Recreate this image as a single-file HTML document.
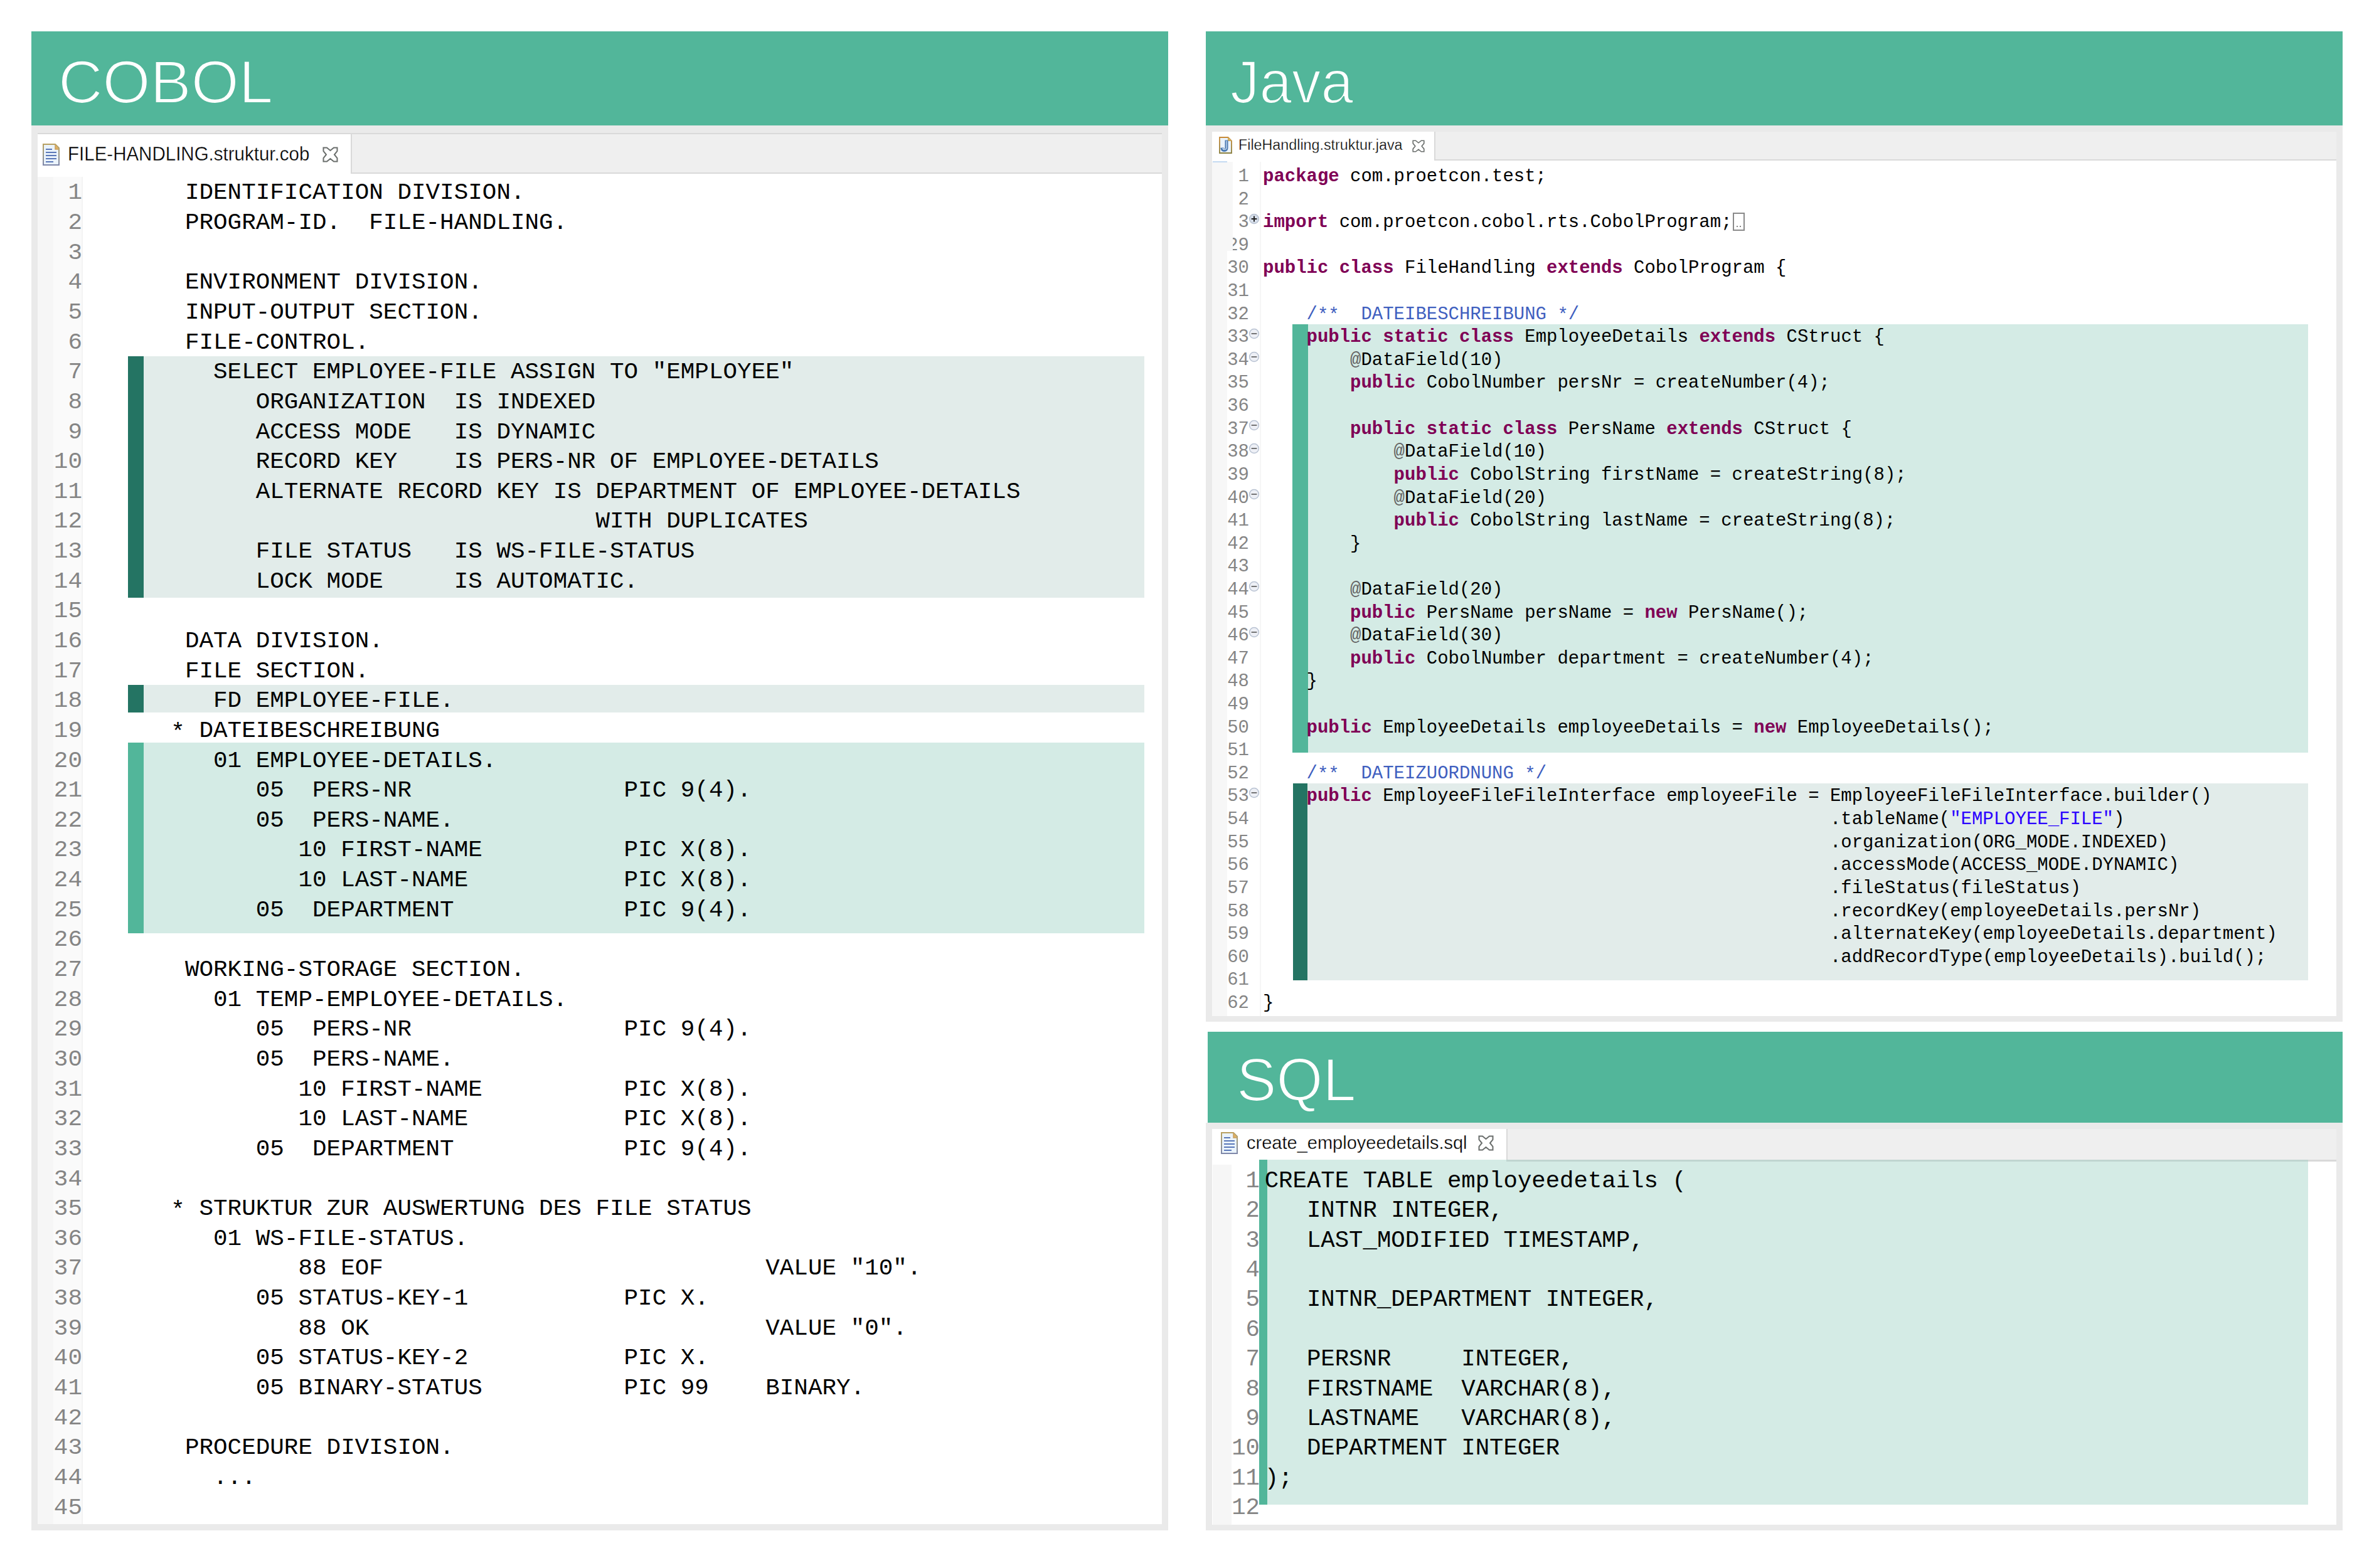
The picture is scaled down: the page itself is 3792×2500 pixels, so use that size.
<!DOCTYPE html>
<html><head><meta charset="utf-8"><style>
html,body{margin:0;padding:0;}
body{width:3792px;height:2500px;background:#fff;position:relative;overflow:hidden;}
.b{position:absolute;}
.t{position:absolute;white-space:pre;margin:0;padding:0;}
.hdr{position:absolute;font-family:"Liberation Sans",sans-serif;color:#fff;white-space:pre;transform-origin:0 0;-webkit-text-stroke:2.2px #52b69a;paint-order:normal;}
.tab{position:absolute;font-family:"Liberation Sans",sans-serif;color:#000;white-space:pre;transform-origin:0 0;-webkit-text-stroke:0.35px #fff;}
.cm{font-family:"Liberation Mono",monospace;}
.k{color:#7f0055;font-weight:bold;}
.c{color:#3f5fbf;}
.s{color:#2a00ff;}
.a{color:#646464;}
.ln{color:#858585;text-align:right;}
</style></head><body>

<div class="b" style="left:50px;top:200px;width:1812px;height:2240px;background:#eaeaea;"></div>
<div class="b" style="left:50px;top:50px;width:1812px;height:150px;background:#52b69a;"></div>
<div class="hdr" style="left:93.4px;top:82.4px;font-size:96.7px;line-height:96.7px;transform:scaleX(1.0106);">COBOL</div>
<div class="b" style="left:60px;top:212px;width:1792px;height:2px;background:#d9d9d9;"></div>
<div class="b" style="left:60px;top:214px;width:1792px;height:63px;background:#efefef;"></div>
<div class="b" style="left:60px;top:275px;width:1792px;height:2px;background:#d9d9d9;"></div>
<div class="b" style="left:559px;top:214px;width:2px;height:63px;background:#d9d9d9;"></div>
<div class="b" style="left:60px;top:214px;width:499px;height:68px;background:#fff;"></div>
<div class="b" style="left:60px;top:277px;width:1792px;height:2153px;background:#fff;"></div>
<div class="b" style="left:60px;top:282px;width:25px;height:2148px;background:#f6f6f6;"></div>
<div class="b" style="left:85px;top:282px;width:45px;height:2148px;background:#fafafa;"></div>
<div class="b" style="left:130px;top:282px;width:2px;height:2148px;background:#f3f3f3;"></div>
<svg class="b" style="left:68px;top:229px" width="27" height="35" viewBox="0 0 27 35"><defs><linearGradient id="fg" x1="0" y1="0" x2="0" y2="1"><stop offset="0" stop-color="#b8a060"/><stop offset="0.5" stop-color="#9a9a8a"/><stop offset="1" stop-color="#7f88aa"/></linearGradient></defs><path d="M1 1 H20 L26 7 V34 H1 Z" fill="#eaf3fb" stroke="url(#fg)" stroke-width="2"/><path d="M20 1 V9 H26" fill="#e0b060" stroke="#c8a060" stroke-width="1.5"/><rect x="5" y="8" width="10" height="2" fill="#5a78b8"/><rect x="5" y="13" width="17" height="2" fill="#5a78b8"/><rect x="5" y="18" width="17" height="2" fill="#5a78b8"/><rect x="5" y="23" width="17" height="2" fill="#5a78b8"/><rect x="5" y="28" width="12" height="2" fill="#5a78b8"/></svg>
<div class="tab" style="left:107.5px;top:229px;font-size:32px;line-height:32px;transform:scaleX(0.922);">FILE-HANDLING.struktur.cob</div>
<svg class="b" style="left:514px;top:234px" width="25" height="25" viewBox="0 0 25 25"><path d="M1.5 7 V1.5 H7 L12.5 6 L18 1.5 H23.5 V7 L19 12.5 L23.5 18 V23.5 H18 L12.5 19 L7 23.5 H1.5 V18 L6 12.5 Z" fill="none" stroke="#6a6e6c" stroke-width="2" stroke-linejoin="miter"/></svg>
<div class="b" style="left:229px;top:568px;width:1595px;height:385px;background:#e2ecea;"></div>
<div class="b" style="left:204px;top:568px;width:25px;height:385px;background:#247463;"></div>
<div class="b" style="left:229px;top:1092px;width:1595px;height:44px;background:#e2ecea;"></div>
<div class="b" style="left:204px;top:1092px;width:25px;height:44px;background:#247463;"></div>
<div class="b" style="left:229px;top:1184px;width:1595px;height:304px;background:#d4ebe5;"></div>
<div class="b" style="left:204px;top:1184px;width:25px;height:304px;background:#52b69a;"></div>
<div class="t cm" style="left:136.9px;top:284.40px;font-size:37.625px;line-height:47.64px;color:#000">       IDENTIFICATION DIVISION.</div>
<div class="t cm ln" style="left:-69px;width:200px;top:284.40px;font-size:37.625px;line-height:47.64px;">1</div>
<div class="t cm" style="left:136.9px;top:332.04px;font-size:37.625px;line-height:47.64px;color:#000">       PROGRAM-ID.  FILE-HANDLING.</div>
<div class="t cm ln" style="left:-69px;width:200px;top:332.04px;font-size:37.625px;line-height:47.64px;">2</div>
<div class="t cm" style="left:136.9px;top:379.68px;font-size:37.625px;line-height:47.64px;color:#000"></div>
<div class="t cm ln" style="left:-69px;width:200px;top:379.68px;font-size:37.625px;line-height:47.64px;">3</div>
<div class="t cm" style="left:136.9px;top:427.32px;font-size:37.625px;line-height:47.64px;color:#000">       ENVIRONMENT DIVISION.</div>
<div class="t cm ln" style="left:-69px;width:200px;top:427.32px;font-size:37.625px;line-height:47.64px;">4</div>
<div class="t cm" style="left:136.9px;top:474.96px;font-size:37.625px;line-height:47.64px;color:#000">       INPUT-OUTPUT SECTION.</div>
<div class="t cm ln" style="left:-69px;width:200px;top:474.96px;font-size:37.625px;line-height:47.64px;">5</div>
<div class="t cm" style="left:136.9px;top:522.60px;font-size:37.625px;line-height:47.64px;color:#000">       FILE-CONTROL.</div>
<div class="t cm ln" style="left:-69px;width:200px;top:522.60px;font-size:37.625px;line-height:47.64px;">6</div>
<div class="t cm" style="left:136.9px;top:570.24px;font-size:37.625px;line-height:47.64px;color:#000">         SELECT EMPLOYEE-FILE ASSIGN TO "EMPLOYEE"</div>
<div class="t cm ln" style="left:-69px;width:200px;top:570.24px;font-size:37.625px;line-height:47.64px;">7</div>
<div class="t cm" style="left:136.9px;top:617.88px;font-size:37.625px;line-height:47.64px;color:#000">            ORGANIZATION  IS INDEXED</div>
<div class="t cm ln" style="left:-69px;width:200px;top:617.88px;font-size:37.625px;line-height:47.64px;">8</div>
<div class="t cm" style="left:136.9px;top:665.52px;font-size:37.625px;line-height:47.64px;color:#000">            ACCESS MODE   IS DYNAMIC</div>
<div class="t cm ln" style="left:-69px;width:200px;top:665.52px;font-size:37.625px;line-height:47.64px;">9</div>
<div class="t cm" style="left:136.9px;top:713.16px;font-size:37.625px;line-height:47.64px;color:#000">            RECORD KEY    IS PERS-NR OF EMPLOYEE-DETAILS</div>
<div class="t cm ln" style="left:-69px;width:200px;top:713.16px;font-size:37.625px;line-height:47.64px;">10</div>
<div class="t cm" style="left:136.9px;top:760.80px;font-size:37.625px;line-height:47.64px;color:#000">            ALTERNATE RECORD KEY IS DEPARTMENT OF EMPLOYEE-DETAILS</div>
<div class="t cm ln" style="left:-69px;width:200px;top:760.80px;font-size:37.625px;line-height:47.64px;">11</div>
<div class="t cm" style="left:136.9px;top:808.44px;font-size:37.625px;line-height:47.64px;color:#000">                                    WITH DUPLICATES</div>
<div class="t cm ln" style="left:-69px;width:200px;top:808.44px;font-size:37.625px;line-height:47.64px;">12</div>
<div class="t cm" style="left:136.9px;top:856.08px;font-size:37.625px;line-height:47.64px;color:#000">            FILE STATUS   IS WS-FILE-STATUS</div>
<div class="t cm ln" style="left:-69px;width:200px;top:856.08px;font-size:37.625px;line-height:47.64px;">13</div>
<div class="t cm" style="left:136.9px;top:903.72px;font-size:37.625px;line-height:47.64px;color:#000">            LOCK MODE     IS AUTOMATIC.</div>
<div class="t cm ln" style="left:-69px;width:200px;top:903.72px;font-size:37.625px;line-height:47.64px;">14</div>
<div class="t cm" style="left:136.9px;top:951.36px;font-size:37.625px;line-height:47.64px;color:#000"></div>
<div class="t cm ln" style="left:-69px;width:200px;top:951.36px;font-size:37.625px;line-height:47.64px;">15</div>
<div class="t cm" style="left:136.9px;top:999.00px;font-size:37.625px;line-height:47.64px;color:#000">       DATA DIVISION.</div>
<div class="t cm ln" style="left:-69px;width:200px;top:999.00px;font-size:37.625px;line-height:47.64px;">16</div>
<div class="t cm" style="left:136.9px;top:1046.64px;font-size:37.625px;line-height:47.64px;color:#000">       FILE SECTION.</div>
<div class="t cm ln" style="left:-69px;width:200px;top:1046.64px;font-size:37.625px;line-height:47.64px;">17</div>
<div class="t cm" style="left:136.9px;top:1094.28px;font-size:37.625px;line-height:47.64px;color:#000">         FD EMPLOYEE-FILE.</div>
<div class="t cm ln" style="left:-69px;width:200px;top:1094.28px;font-size:37.625px;line-height:47.64px;">18</div>
<div class="t cm" style="left:136.9px;top:1141.92px;font-size:37.625px;line-height:47.64px;color:#000">      <span style="position:relative;top:3px">*</span> DATEIBESCHREIBUNG</div>
<div class="t cm ln" style="left:-69px;width:200px;top:1141.92px;font-size:37.625px;line-height:47.64px;">19</div>
<div class="t cm" style="left:136.9px;top:1189.56px;font-size:37.625px;line-height:47.64px;color:#000">         01 EMPLOYEE-DETAILS.</div>
<div class="t cm ln" style="left:-69px;width:200px;top:1189.56px;font-size:37.625px;line-height:47.64px;">20</div>
<div class="t cm" style="left:136.9px;top:1237.20px;font-size:37.625px;line-height:47.64px;color:#000">            05  PERS-NR               PIC 9(4).</div>
<div class="t cm ln" style="left:-69px;width:200px;top:1237.20px;font-size:37.625px;line-height:47.64px;">21</div>
<div class="t cm" style="left:136.9px;top:1284.84px;font-size:37.625px;line-height:47.64px;color:#000">            05  PERS-NAME.</div>
<div class="t cm ln" style="left:-69px;width:200px;top:1284.84px;font-size:37.625px;line-height:47.64px;">22</div>
<div class="t cm" style="left:136.9px;top:1332.48px;font-size:37.625px;line-height:47.64px;color:#000">               10 FIRST-NAME          PIC X(8).</div>
<div class="t cm ln" style="left:-69px;width:200px;top:1332.48px;font-size:37.625px;line-height:47.64px;">23</div>
<div class="t cm" style="left:136.9px;top:1380.12px;font-size:37.625px;line-height:47.64px;color:#000">               10 LAST-NAME           PIC X(8).</div>
<div class="t cm ln" style="left:-69px;width:200px;top:1380.12px;font-size:37.625px;line-height:47.64px;">24</div>
<div class="t cm" style="left:136.9px;top:1427.76px;font-size:37.625px;line-height:47.64px;color:#000">            05  DEPARTMENT            PIC 9(4).</div>
<div class="t cm ln" style="left:-69px;width:200px;top:1427.76px;font-size:37.625px;line-height:47.64px;">25</div>
<div class="t cm" style="left:136.9px;top:1475.40px;font-size:37.625px;line-height:47.64px;color:#000"></div>
<div class="t cm ln" style="left:-69px;width:200px;top:1475.40px;font-size:37.625px;line-height:47.64px;">26</div>
<div class="t cm" style="left:136.9px;top:1523.04px;font-size:37.625px;line-height:47.64px;color:#000">       WORKING-STORAGE SECTION.</div>
<div class="t cm ln" style="left:-69px;width:200px;top:1523.04px;font-size:37.625px;line-height:47.64px;">27</div>
<div class="t cm" style="left:136.9px;top:1570.68px;font-size:37.625px;line-height:47.64px;color:#000">         01 TEMP-EMPLOYEE-DETAILS.</div>
<div class="t cm ln" style="left:-69px;width:200px;top:1570.68px;font-size:37.625px;line-height:47.64px;">28</div>
<div class="t cm" style="left:136.9px;top:1618.32px;font-size:37.625px;line-height:47.64px;color:#000">            05  PERS-NR               PIC 9(4).</div>
<div class="t cm ln" style="left:-69px;width:200px;top:1618.32px;font-size:37.625px;line-height:47.64px;">29</div>
<div class="t cm" style="left:136.9px;top:1665.96px;font-size:37.625px;line-height:47.64px;color:#000">            05  PERS-NAME.</div>
<div class="t cm ln" style="left:-69px;width:200px;top:1665.96px;font-size:37.625px;line-height:47.64px;">30</div>
<div class="t cm" style="left:136.9px;top:1713.60px;font-size:37.625px;line-height:47.64px;color:#000">               10 FIRST-NAME          PIC X(8).</div>
<div class="t cm ln" style="left:-69px;width:200px;top:1713.60px;font-size:37.625px;line-height:47.64px;">31</div>
<div class="t cm" style="left:136.9px;top:1761.24px;font-size:37.625px;line-height:47.64px;color:#000">               10 LAST-NAME           PIC X(8).</div>
<div class="t cm ln" style="left:-69px;width:200px;top:1761.24px;font-size:37.625px;line-height:47.64px;">32</div>
<div class="t cm" style="left:136.9px;top:1808.88px;font-size:37.625px;line-height:47.64px;color:#000">            05  DEPARTMENT            PIC 9(4).</div>
<div class="t cm ln" style="left:-69px;width:200px;top:1808.88px;font-size:37.625px;line-height:47.64px;">33</div>
<div class="t cm" style="left:136.9px;top:1856.52px;font-size:37.625px;line-height:47.64px;color:#000"></div>
<div class="t cm ln" style="left:-69px;width:200px;top:1856.52px;font-size:37.625px;line-height:47.64px;">34</div>
<div class="t cm" style="left:136.9px;top:1904.16px;font-size:37.625px;line-height:47.64px;color:#000">      <span style="position:relative;top:3px">*</span> STRUKTUR ZUR AUSWERTUNG DES FILE STATUS</div>
<div class="t cm ln" style="left:-69px;width:200px;top:1904.16px;font-size:37.625px;line-height:47.64px;">35</div>
<div class="t cm" style="left:136.9px;top:1951.80px;font-size:37.625px;line-height:47.64px;color:#000">         01 WS-FILE-STATUS.</div>
<div class="t cm ln" style="left:-69px;width:200px;top:1951.80px;font-size:37.625px;line-height:47.64px;">36</div>
<div class="t cm" style="left:136.9px;top:1999.44px;font-size:37.625px;line-height:47.64px;color:#000">               88 EOF                           VALUE "10".</div>
<div class="t cm ln" style="left:-69px;width:200px;top:1999.44px;font-size:37.625px;line-height:47.64px;">37</div>
<div class="t cm" style="left:136.9px;top:2047.08px;font-size:37.625px;line-height:47.64px;color:#000">            05 STATUS-KEY-1           PIC X.</div>
<div class="t cm ln" style="left:-69px;width:200px;top:2047.08px;font-size:37.625px;line-height:47.64px;">38</div>
<div class="t cm" style="left:136.9px;top:2094.72px;font-size:37.625px;line-height:47.64px;color:#000">               88 OK                            VALUE "0".</div>
<div class="t cm ln" style="left:-69px;width:200px;top:2094.72px;font-size:37.625px;line-height:47.64px;">39</div>
<div class="t cm" style="left:136.9px;top:2142.36px;font-size:37.625px;line-height:47.64px;color:#000">            05 STATUS-KEY-2           PIC X.</div>
<div class="t cm ln" style="left:-69px;width:200px;top:2142.36px;font-size:37.625px;line-height:47.64px;">40</div>
<div class="t cm" style="left:136.9px;top:2190.00px;font-size:37.625px;line-height:47.64px;color:#000">            05 BINARY-STATUS          PIC 99    BINARY.</div>
<div class="t cm ln" style="left:-69px;width:200px;top:2190.00px;font-size:37.625px;line-height:47.64px;">41</div>
<div class="t cm" style="left:136.9px;top:2237.64px;font-size:37.625px;line-height:47.64px;color:#000"></div>
<div class="t cm ln" style="left:-69px;width:200px;top:2237.64px;font-size:37.625px;line-height:47.64px;">42</div>
<div class="t cm" style="left:136.9px;top:2285.28px;font-size:37.625px;line-height:47.64px;color:#000">       PROCEDURE DIVISION.</div>
<div class="t cm ln" style="left:-69px;width:200px;top:2285.28px;font-size:37.625px;line-height:47.64px;">43</div>
<div class="t cm" style="left:136.9px;top:2332.92px;font-size:37.625px;line-height:47.64px;color:#000">         ...</div>
<div class="t cm ln" style="left:-69px;width:200px;top:2332.92px;font-size:37.625px;line-height:47.64px;">44</div>
<div class="t cm" style="left:136.9px;top:2380.56px;font-size:37.625px;line-height:47.64px;color:#000"></div>
<div class="t cm ln" style="left:-69px;width:200px;top:2380.56px;font-size:37.625px;line-height:47.64px;">45</div>
<div class="b" style="left:1922px;top:200px;width:1812px;height:1429px;background:#eaeaea;"></div>
<div class="b" style="left:1922px;top:50px;width:1812px;height:150px;background:#52b69a;"></div>
<div class="hdr" style="left:1960.9px;top:81.7px;font-size:96.7px;line-height:96.7px;transform:scaleX(0.96);">Java</div>
<div class="b" style="left:1932px;top:210px;width:1792px;height:44px;background:#efefef;"></div>
<div class="b" style="left:1932px;top:254px;width:1792px;height:2px;background:#d9d9d9;"></div>
<div class="b" style="left:2286px;top:210px;width:2px;height:46px;background:#d9d9d9;"></div>
<div class="b" style="left:1932px;top:210px;width:354px;height:48px;background:#fff;"></div>
<div class="b" style="left:1932px;top:256px;width:1792px;height:1364px;background:#fff;"></div>
<div class="b" style="left:1932px;top:258px;width:33px;height:142px;background:#f7f7f7;"></div>
<div class="b" style="left:1932px;top:400px;width:24px;height:1220px;background:#f7f7f7;"></div>
<div class="b" style="left:2008px;top:258px;width:2px;height:1362px;background:#f6f6f6;"></div>
<svg class="b" style="left:1943px;top:218px" width="21" height="27" viewBox="0 0 21 27"><defs><linearGradient id="jg" x1="0" y1="0" x2="0" y2="1"><stop offset="0" stop-color="#c88a38"/><stop offset="1" stop-color="#8a8040"/></linearGradient></defs><path d="M1 1 H14.5 L20 6.5 V26 H1 Z" fill="#eaf3fc" stroke="url(#jg)" stroke-width="1.8"/><path d="M14.5 1 V6.5 H20" fill="#d8b868" stroke="#c8a050" stroke-width="1"/><path d="M12 5.5 V17.5 Q12 21.5 8.3 21.5 Q5.2 21.5 4.8 17.5" fill="none" stroke="#4a78b0" stroke-width="5"/><path d="M12 6.5 V17.5 Q12 20.3 8.3 20.3 Q6.4 20.3 5.9 18" fill="none" stroke="#c8dcf0" stroke-width="1.4"/></svg>
<div class="tab" style="left:1974px;top:219.8px;font-size:23.3px;line-height:23.3px;transform:scaleX(1.0);">FileHandling.struktur.java</div>
<svg class="b" style="left:2251px;top:223px" width="20" height="20" viewBox="0 0 25 25"><path d="M1.5 7 V1.5 H7 L12.5 6 L18 1.5 H23.5 V7 L19 12.5 L23.5 18 V23.5 H18 L12.5 19 L7 23.5 H1.5 V18 L6 12.5 Z" fill="none" stroke="#6a6e6c" stroke-width="2" stroke-linejoin="miter"/></svg>
<div class="b" style="left:2085px;top:517px;width:1594px;height:683px;background:#d4ebe5;"></div>
<div class="b" style="left:2060px;top:517px;width:25px;height:683px;background:#52b69a;"></div>
<div class="b" style="left:2084px;top:1249px;width:1595px;height:314px;background:#e2ecea;"></div>
<div class="b" style="left:2061px;top:1249px;width:23px;height:314px;background:#247463;"></div>
<div class="t cm" style="left:2013px;top:264.00px;font-size:28.97px;line-height:36.61px;color:#000"><span class="k">package</span> com.proetcon.test;</div>
<div class="t cm ln" style="left:1791px;width:200px;top:264.00px;font-size:28.97px;line-height:36.61px;">1</div>
<div class="t cm" style="left:2013px;top:300.61px;font-size:28.97px;line-height:36.61px;color:#000"></div>
<div class="t cm ln" style="left:1791px;width:200px;top:300.61px;font-size:28.97px;line-height:36.61px;">2</div>
<div class="t cm" style="left:2013px;top:337.22px;font-size:28.97px;line-height:36.61px;color:#000"><span class="k">import</span> com.proetcon.cobol.rts.CobolProgram;<span style="display:inline-block;width:19px;height:29px;border:2px solid #8a8a8a;box-sizing:border-box;vertical-align:-6px;margin-left:1px;position:relative;"><span style="position:absolute;left:4px;bottom:4px;width:2px;height:2px;background:#888"></span><span style="position:absolute;left:9px;bottom:4px;width:2px;height:2px;background:#888"></span></span></div>
<div class="t cm ln" style="left:1791px;width:200px;top:337.22px;font-size:28.97px;line-height:36.61px;">3</div>
<svg class="b" style="left:1990px;top:339.9px" width="18" height="18" viewBox="0 0 18 18"><circle cx="9" cy="9" r="7.4" fill="#d6deea" stroke="#b8c2d2" stroke-width="1.5"/><path d="M4.6 9 H13.4 M9 4.6 V13.4" stroke="#222" stroke-width="2"/></svg>
<div class="t cm" style="left:2013px;top:373.83px;font-size:28.97px;line-height:36.61px;color:#000"></div>
<div class="t cm ln" style="left:1791px;width:200px;top:373.83px;font-size:28.97px;line-height:36.61px;">29</div>
<div class="t cm" style="left:2013px;top:410.44px;font-size:28.97px;line-height:36.61px;color:#000"><span class="k">public</span> <span class="k">class</span> FileHandling <span class="k">extends</span> CobolProgram {</div>
<div class="t cm ln" style="left:1791px;width:200px;top:410.44px;font-size:28.97px;line-height:36.61px;">30</div>
<div class="t cm" style="left:2013px;top:447.05px;font-size:28.97px;line-height:36.61px;color:#000"></div>
<div class="t cm ln" style="left:1791px;width:200px;top:447.05px;font-size:28.97px;line-height:36.61px;">31</div>
<div class="t cm" style="left:2013px;top:483.66px;font-size:28.97px;line-height:36.61px;color:#000"><span class="c">    /<span style="position:relative;top:2px">*</span><span style="position:relative;top:2px">*</span>  DATEIBESCHREIBUNG <span style="position:relative;top:2px">*</span>/</span></div>
<div class="t cm ln" style="left:1791px;width:200px;top:483.66px;font-size:28.97px;line-height:36.61px;">32</div>
<div class="t cm" style="left:2013px;top:520.27px;font-size:28.97px;line-height:36.61px;color:#000">    <span class="k">public</span> <span class="k">static</span> <span class="k">class</span> EmployeeDetails <span class="k">extends</span> CStruct {</div>
<div class="t cm ln" style="left:1791px;width:200px;top:520.27px;font-size:28.97px;line-height:36.61px;">33</div>
<svg class="b" style="left:1990px;top:523.0px" width="18" height="18" viewBox="0 0 18 18"><circle cx="9" cy="9" r="7.4" fill="#eef0f6" stroke="#b8c2d2" stroke-width="1.5"/><path d="M4.6 9 H13.4" stroke="#555" stroke-width="1.6"/></svg>
<div class="t cm" style="left:2013px;top:556.88px;font-size:28.97px;line-height:36.61px;color:#000">        <span class="a">@</span>DataField(10)</div>
<div class="t cm ln" style="left:1791px;width:200px;top:556.88px;font-size:28.97px;line-height:36.61px;">34</div>
<svg class="b" style="left:1990px;top:559.6px" width="18" height="18" viewBox="0 0 18 18"><circle cx="9" cy="9" r="7.4" fill="#eef0f6" stroke="#b8c2d2" stroke-width="1.5"/><path d="M4.6 9 H13.4" stroke="#555" stroke-width="1.6"/></svg>
<div class="t cm" style="left:2013px;top:593.49px;font-size:28.97px;line-height:36.61px;color:#000">        <span class="k">public</span> CobolNumber persNr = createNumber(4);</div>
<div class="t cm ln" style="left:1791px;width:200px;top:593.49px;font-size:28.97px;line-height:36.61px;">35</div>
<div class="t cm" style="left:2013px;top:630.10px;font-size:28.97px;line-height:36.61px;color:#000"></div>
<div class="t cm ln" style="left:1791px;width:200px;top:630.10px;font-size:28.97px;line-height:36.61px;">36</div>
<div class="t cm" style="left:2013px;top:666.71px;font-size:28.97px;line-height:36.61px;color:#000">        <span class="k">public</span> <span class="k">static</span> <span class="k">class</span> PersName <span class="k">extends</span> CStruct {</div>
<div class="t cm ln" style="left:1791px;width:200px;top:666.71px;font-size:28.97px;line-height:36.61px;">37</div>
<svg class="b" style="left:1990px;top:669.4px" width="18" height="18" viewBox="0 0 18 18"><circle cx="9" cy="9" r="7.4" fill="#eef0f6" stroke="#b8c2d2" stroke-width="1.5"/><path d="M4.6 9 H13.4" stroke="#555" stroke-width="1.6"/></svg>
<div class="t cm" style="left:2013px;top:703.32px;font-size:28.97px;line-height:36.61px;color:#000">            <span class="a">@</span>DataField(10)</div>
<div class="t cm ln" style="left:1791px;width:200px;top:703.32px;font-size:28.97px;line-height:36.61px;">38</div>
<svg class="b" style="left:1990px;top:706.0px" width="18" height="18" viewBox="0 0 18 18"><circle cx="9" cy="9" r="7.4" fill="#eef0f6" stroke="#b8c2d2" stroke-width="1.5"/><path d="M4.6 9 H13.4" stroke="#555" stroke-width="1.6"/></svg>
<div class="t cm" style="left:2013px;top:739.93px;font-size:28.97px;line-height:36.61px;color:#000">            <span class="k">public</span> CobolString firstName = createString(8);</div>
<div class="t cm ln" style="left:1791px;width:200px;top:739.93px;font-size:28.97px;line-height:36.61px;">39</div>
<div class="t cm" style="left:2013px;top:776.54px;font-size:28.97px;line-height:36.61px;color:#000">            <span class="a">@</span>DataField(20)</div>
<div class="t cm ln" style="left:1791px;width:200px;top:776.54px;font-size:28.97px;line-height:36.61px;">40</div>
<svg class="b" style="left:1990px;top:779.2px" width="18" height="18" viewBox="0 0 18 18"><circle cx="9" cy="9" r="7.4" fill="#eef0f6" stroke="#b8c2d2" stroke-width="1.5"/><path d="M4.6 9 H13.4" stroke="#555" stroke-width="1.6"/></svg>
<div class="t cm" style="left:2013px;top:813.15px;font-size:28.97px;line-height:36.61px;color:#000">            <span class="k">public</span> CobolString lastName = createString(8);</div>
<div class="t cm ln" style="left:1791px;width:200px;top:813.15px;font-size:28.97px;line-height:36.61px;">41</div>
<div class="t cm" style="left:2013px;top:849.76px;font-size:28.97px;line-height:36.61px;color:#000">        }</div>
<div class="t cm ln" style="left:1791px;width:200px;top:849.76px;font-size:28.97px;line-height:36.61px;">42</div>
<div class="t cm" style="left:2013px;top:886.37px;font-size:28.97px;line-height:36.61px;color:#000"></div>
<div class="t cm ln" style="left:1791px;width:200px;top:886.37px;font-size:28.97px;line-height:36.61px;">43</div>
<div class="t cm" style="left:2013px;top:922.98px;font-size:28.97px;line-height:36.61px;color:#000">        <span class="a">@</span>DataField(20)</div>
<div class="t cm ln" style="left:1791px;width:200px;top:922.98px;font-size:28.97px;line-height:36.61px;">44</div>
<svg class="b" style="left:1990px;top:925.7px" width="18" height="18" viewBox="0 0 18 18"><circle cx="9" cy="9" r="7.4" fill="#eef0f6" stroke="#b8c2d2" stroke-width="1.5"/><path d="M4.6 9 H13.4" stroke="#555" stroke-width="1.6"/></svg>
<div class="t cm" style="left:2013px;top:959.59px;font-size:28.97px;line-height:36.61px;color:#000">        <span class="k">public</span> PersName persName = <span class="k">new</span> PersName();</div>
<div class="t cm ln" style="left:1791px;width:200px;top:959.59px;font-size:28.97px;line-height:36.61px;">45</div>
<div class="t cm" style="left:2013px;top:996.20px;font-size:28.97px;line-height:36.61px;color:#000">        <span class="a">@</span>DataField(30)</div>
<div class="t cm ln" style="left:1791px;width:200px;top:996.20px;font-size:28.97px;line-height:36.61px;">46</div>
<svg class="b" style="left:1990px;top:998.9px" width="18" height="18" viewBox="0 0 18 18"><circle cx="9" cy="9" r="7.4" fill="#eef0f6" stroke="#b8c2d2" stroke-width="1.5"/><path d="M4.6 9 H13.4" stroke="#555" stroke-width="1.6"/></svg>
<div class="t cm" style="left:2013px;top:1032.81px;font-size:28.97px;line-height:36.61px;color:#000">        <span class="k">public</span> CobolNumber department = createNumber(4);</div>
<div class="t cm ln" style="left:1791px;width:200px;top:1032.81px;font-size:28.97px;line-height:36.61px;">47</div>
<div class="t cm" style="left:2013px;top:1069.42px;font-size:28.97px;line-height:36.61px;color:#000">    }</div>
<div class="t cm ln" style="left:1791px;width:200px;top:1069.42px;font-size:28.97px;line-height:36.61px;">48</div>
<div class="t cm" style="left:2013px;top:1106.03px;font-size:28.97px;line-height:36.61px;color:#000"></div>
<div class="t cm ln" style="left:1791px;width:200px;top:1106.03px;font-size:28.97px;line-height:36.61px;">49</div>
<div class="t cm" style="left:2013px;top:1142.64px;font-size:28.97px;line-height:36.61px;color:#000">    <span class="k">public</span> EmployeeDetails employeeDetails = <span class="k">new</span> EmployeeDetails();</div>
<div class="t cm ln" style="left:1791px;width:200px;top:1142.64px;font-size:28.97px;line-height:36.61px;">50</div>
<div class="t cm" style="left:2013px;top:1179.25px;font-size:28.97px;line-height:36.61px;color:#000"></div>
<div class="t cm ln" style="left:1791px;width:200px;top:1179.25px;font-size:28.97px;line-height:36.61px;">51</div>
<div class="t cm" style="left:2013px;top:1215.86px;font-size:28.97px;line-height:36.61px;color:#000"><span class="c">    /<span style="position:relative;top:2px">*</span><span style="position:relative;top:2px">*</span>  DATEIZUORDNUNG <span style="position:relative;top:2px">*</span>/</span></div>
<div class="t cm ln" style="left:1791px;width:200px;top:1215.86px;font-size:28.97px;line-height:36.61px;">52</div>
<div class="t cm" style="left:2013px;top:1252.47px;font-size:28.97px;line-height:36.61px;color:#000">    <span class="k">public</span> EmployeeFileFileInterface employeeFile = EmployeeFileFileInterface.builder()</div>
<div class="t cm ln" style="left:1791px;width:200px;top:1252.47px;font-size:28.97px;line-height:36.61px;">53</div>
<svg class="b" style="left:1990px;top:1255.2px" width="18" height="18" viewBox="0 0 18 18"><circle cx="9" cy="9" r="7.4" fill="#eef0f6" stroke="#b8c2d2" stroke-width="1.5"/><path d="M4.6 9 H13.4" stroke="#555" stroke-width="1.6"/></svg>
<div class="t cm" style="left:2013px;top:1289.08px;font-size:28.97px;line-height:36.61px;color:#000">                                                    .tableName(<span class="s">"EMPLOYEE_FILE"</span>)</div>
<div class="t cm ln" style="left:1791px;width:200px;top:1289.08px;font-size:28.97px;line-height:36.61px;">54</div>
<div class="t cm" style="left:2013px;top:1325.69px;font-size:28.97px;line-height:36.61px;color:#000">                                                    .organization(ORG_MODE.INDEXED)</div>
<div class="t cm ln" style="left:1791px;width:200px;top:1325.69px;font-size:28.97px;line-height:36.61px;">55</div>
<div class="t cm" style="left:2013px;top:1362.30px;font-size:28.97px;line-height:36.61px;color:#000">                                                    .accessMode(ACCESS_MODE.DYNAMIC)</div>
<div class="t cm ln" style="left:1791px;width:200px;top:1362.30px;font-size:28.97px;line-height:36.61px;">56</div>
<div class="t cm" style="left:2013px;top:1398.91px;font-size:28.97px;line-height:36.61px;color:#000">                                                    .fileStatus(fileStatus)</div>
<div class="t cm ln" style="left:1791px;width:200px;top:1398.91px;font-size:28.97px;line-height:36.61px;">57</div>
<div class="t cm" style="left:2013px;top:1435.52px;font-size:28.97px;line-height:36.61px;color:#000">                                                    .recordKey(employeeDetails.persNr)</div>
<div class="t cm ln" style="left:1791px;width:200px;top:1435.52px;font-size:28.97px;line-height:36.61px;">58</div>
<div class="t cm" style="left:2013px;top:1472.13px;font-size:28.97px;line-height:36.61px;color:#000">                                                    .alternateKey(employeeDetails.department)</div>
<div class="t cm ln" style="left:1791px;width:200px;top:1472.13px;font-size:28.97px;line-height:36.61px;">59</div>
<div class="t cm" style="left:2013px;top:1508.74px;font-size:28.97px;line-height:36.61px;color:#000">                                                    .addRecordType(employeeDetails).build();</div>
<div class="t cm ln" style="left:1791px;width:200px;top:1508.74px;font-size:28.97px;line-height:36.61px;">60</div>
<div class="t cm" style="left:2013px;top:1545.35px;font-size:28.97px;line-height:36.61px;color:#000"></div>
<div class="t cm ln" style="left:1791px;width:200px;top:1545.35px;font-size:28.97px;line-height:36.61px;">61</div>
<div class="t cm" style="left:2013px;top:1581.96px;font-size:28.97px;line-height:36.61px;color:#000">}</div>
<div class="t cm ln" style="left:1791px;width:200px;top:1581.96px;font-size:28.97px;line-height:36.61px;">62</div>
<div class="b" style="left:1932px;top:258px;width:33px;height:142px;background:#f7f7f7;"></div>
<div class="b" style="left:1933px;top:257px;width:23px;height:2px;background:#c4daf2;"></div>
<div class="b" style="left:1922px;top:1790px;width:1812px;height:650px;background:#eaeaea;"></div>
<div class="b" style="left:1925px;top:1645px;width:1809px;height:145px;background:#52b69a;"></div>
<div class="hdr" style="left:1970.6000000000001px;top:1672.7px;font-size:96.7px;line-height:96.7px;transform:scaleX(0.9835);">SQL</div>
<div class="b" style="left:1932px;top:1800px;width:1792px;height:49px;background:#efefef;"></div>
<div class="b" style="left:1932px;top:1849px;width:1792px;height:3px;background:#d9d9d9;"></div>
<div class="b" style="left:2401px;top:1800px;width:2px;height:52px;background:#d9d9d9;"></div>
<div class="b" style="left:1932px;top:1800px;width:469px;height:57px;background:#fff;"></div>
<div class="b" style="left:1932px;top:1852px;width:1792px;height:579px;background:#fff;"></div>
<div class="b" style="left:1933px;top:1857px;width:30px;height:574px;background:#f6f6f6;"></div>
<svg class="b" style="left:1946px;top:1805px" width="27" height="35" viewBox="0 0 27 35"><defs><linearGradient id="fg" x1="0" y1="0" x2="0" y2="1"><stop offset="0" stop-color="#b8a060"/><stop offset="0.5" stop-color="#9a9a8a"/><stop offset="1" stop-color="#7f88aa"/></linearGradient></defs><path d="M1 1 H20 L26 7 V34 H1 Z" fill="#eaf3fb" stroke="url(#fg)" stroke-width="2"/><path d="M20 1 V9 H26" fill="#e0b060" stroke="#c8a060" stroke-width="1.5"/><rect x="5" y="8" width="10" height="2" fill="#5a78b8"/><rect x="5" y="13" width="17" height="2" fill="#5a78b8"/><rect x="5" y="18" width="17" height="2" fill="#5a78b8"/><rect x="5" y="23" width="17" height="2" fill="#5a78b8"/><rect x="5" y="28" width="12" height="2" fill="#5a78b8"/></svg>
<div class="tab" style="left:1986.6px;top:1807.2px;font-size:30px;line-height:30px;transform:scaleX(0.967);">create_employeedetails.sql</div>
<svg class="b" style="left:2356px;top:1810px" width="25" height="25" viewBox="0 0 25 25"><path d="M1.5 7 V1.5 H7 L12.5 6 L18 1.5 H23.5 V7 L19 12.5 L23.5 18 V23.5 H18 L12.5 19 L7 23.5 H1.5 V18 L6 12.5 Z" fill="none" stroke="#6a6e6c" stroke-width="2" stroke-linejoin="miter"/></svg>
<div class="b" style="left:2020px;top:1849px;width:1659px;height:550px;background:#d4ebe5;"></div>
<div class="b" style="left:2007px;top:1849px;width:13px;height:550px;background:#52b69a;"></div>
<div class="b" style="left:2401px;top:1849px;width:1278px;height:3px;background:rgba(0,0,0,0.09);"></div>
<div class="t cm" style="left:2015.7px;top:1860.00px;font-size:37.35px;line-height:47.37px;color:#000">CREATE TABLE employeedetails (</div>
<div class="t cm ln" style="left:1808px;width:200px;top:1860.00px;font-size:37.35px;line-height:47.37px;">1</div>
<div class="t cm" style="left:2015.7px;top:1907.37px;font-size:37.35px;line-height:47.37px;color:#000">   INTNR INTEGER,</div>
<div class="t cm ln" style="left:1808px;width:200px;top:1907.37px;font-size:37.35px;line-height:47.37px;">2</div>
<div class="t cm" style="left:2015.7px;top:1954.74px;font-size:37.35px;line-height:47.37px;color:#000">   LAST_MODIFIED TIMESTAMP,</div>
<div class="t cm ln" style="left:1808px;width:200px;top:1954.74px;font-size:37.35px;line-height:47.37px;">3</div>
<div class="t cm" style="left:2015.7px;top:2002.11px;font-size:37.35px;line-height:47.37px;color:#000"></div>
<div class="t cm ln" style="left:1808px;width:200px;top:2002.11px;font-size:37.35px;line-height:47.37px;">4</div>
<div class="t cm" style="left:2015.7px;top:2049.48px;font-size:37.35px;line-height:47.37px;color:#000">   INTNR_DEPARTMENT INTEGER,</div>
<div class="t cm ln" style="left:1808px;width:200px;top:2049.48px;font-size:37.35px;line-height:47.37px;">5</div>
<div class="t cm" style="left:2015.7px;top:2096.85px;font-size:37.35px;line-height:47.37px;color:#000"></div>
<div class="t cm ln" style="left:1808px;width:200px;top:2096.85px;font-size:37.35px;line-height:47.37px;">6</div>
<div class="t cm" style="left:2015.7px;top:2144.22px;font-size:37.35px;line-height:47.37px;color:#000">   PERSNR     INTEGER,</div>
<div class="t cm ln" style="left:1808px;width:200px;top:2144.22px;font-size:37.35px;line-height:47.37px;">7</div>
<div class="t cm" style="left:2015.7px;top:2191.59px;font-size:37.35px;line-height:47.37px;color:#000">   FIRSTNAME  VARCHAR(8),</div>
<div class="t cm ln" style="left:1808px;width:200px;top:2191.59px;font-size:37.35px;line-height:47.37px;">8</div>
<div class="t cm" style="left:2015.7px;top:2238.96px;font-size:37.35px;line-height:47.37px;color:#000">   LASTNAME   VARCHAR(8),</div>
<div class="t cm ln" style="left:1808px;width:200px;top:2238.96px;font-size:37.35px;line-height:47.37px;">9</div>
<div class="t cm" style="left:2015.7px;top:2286.33px;font-size:37.35px;line-height:47.37px;color:#000">   DEPARTMENT INTEGER</div>
<div class="t cm ln" style="left:1808px;width:200px;top:2286.33px;font-size:37.35px;line-height:47.37px;">10</div>
<div class="t cm" style="left:2015.7px;top:2333.70px;font-size:37.35px;line-height:47.37px;color:#000">);</div>
<div class="t cm ln" style="left:1808px;width:200px;top:2333.70px;font-size:37.35px;line-height:47.37px;">11</div>
<div class="t cm" style="left:2015.7px;top:2381.07px;font-size:37.35px;line-height:47.37px;color:#000"></div>
<div class="t cm ln" style="left:1808px;width:200px;top:2381.07px;font-size:37.35px;line-height:47.37px;">12</div>
</body></html>
